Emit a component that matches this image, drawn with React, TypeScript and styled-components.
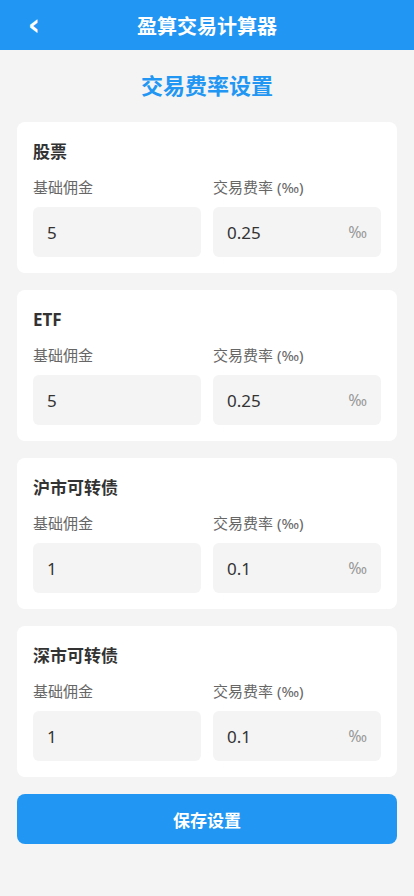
import styled, { createGlobalStyle } from "styled-components";

const GlobalStyle = createGlobalStyle`
  html, body {
    margin: 0;
    padding: 0;
    background: #f4f4f4;
    font-family: "Noto Sans", "Noto Sans CJK SC", sans-serif;
  }
  * {
    box-sizing: border-box;
  }
`;

const Page = styled.div`
  min-height: 896px;
  background: #f4f4f4;
`;

const Header = styled.header`
  position: relative;
  height: 50px;
  background: #2196f3;
  display: flex;
  align-items: center;
  justify-content: center;
`;

const BackButton = styled.button`
  position: absolute;
  left: 22px;
  top: 9px;
  width: 24px;
  height: 32px;
  border: none;
  background: none;
  padding: 0;
  color: #fff;
  font-family: "DejaVu Sans", sans-serif;
  font-size: 30px;
  font-weight: 700;
  line-height: 32px;
`;

const HeaderTitle = styled.h1`
  margin: 0;
  color: #fff;
  font-size: 20px;
  font-weight: 700;
`;

const Main = styled.main`
  padding: 0 17px 40px;
  display: flex;
  flex-direction: column;
  gap: 17px;
`;

const PageTitle = styled.h2`
  margin: 20px 0 5px;
  text-align: center;
  color: #2196f3;
  font-size: 22px;
  font-weight: 700;
  line-height: 30px;
`;

const Card = styled.section`
  background: #fff;
  border-radius: 8px;
  padding: 16px;
`;

const CardTitle = styled.h3`
  margin: 0 0 11px;
  color: #333;
  font-size: 17px;
  font-weight: 700;
  line-height: 28px;
`;

const FieldRow = styled.div`
  display: grid;
  grid-template-columns: minmax(0, 1fr) minmax(0, 1fr);
  gap: 12px;
`;

const Field = styled.div`
  display: flex;
  flex-direction: column;
  min-width: 0;
`;

const Label = styled.label`
  color: #666;
  font-size: 15px;
  line-height: 20px;
  margin-bottom: 10px;
`;

const InputBox = styled.div`
  height: 50px;
  border-radius: 6px;
  background: #f4f4f4;
  display: flex;
  align-items: center;
  padding: 0 14px;
`;

const Input = styled.input`
  flex: 1;
  width: 100%;
  min-width: 0;
  border: none;
  background: transparent;
  outline: none;
  padding: 0;
  color: #333;
  font-family: inherit;
  font-size: 17px;
`;

const Unit = styled.span`
  color: #999;
  font-size: 16px;
`;

const SaveButton = styled.button`
  height: 50px;
  border: none;
  border-radius: 8px;
  background: #2196f3;
  color: #fff;
  font-family: inherit;
  font-size: 17px;
  font-weight: 700;
`;

const rates = [
  { name: "股票", base: "5", rate: "0.25" },
  { name: "ETF", base: "5", rate: "0.25" },
  { name: "沪市可转债", base: "1", rate: "0.1" },
  { name: "深市可转债", base: "1", rate: "0.1" },
];

const App = () => {
  return (
    <Page>
      <GlobalStyle />
      <Header>
        <BackButton>‹</BackButton>
        <HeaderTitle>盈算交易计算器</HeaderTitle>
      </Header>
      <Main>
        <PageTitle>交易费率设置</PageTitle>
        {rates.map((item) => (
          <Card key={item.name}>
            <CardTitle>{item.name}</CardTitle>
            <FieldRow>
              <Field>
                <Label>基础佣金</Label>
                <InputBox>
                  <Input defaultValue={item.base} />
                </InputBox>
              </Field>
              <Field>
                <Label>交易费率 (‰)</Label>
                <InputBox>
                  <Input defaultValue={item.rate} />
                  <Unit>‰</Unit>
                </InputBox>
              </Field>
            </FieldRow>
          </Card>
        ))}
        <SaveButton>保存设置</SaveButton>
      </Main>
    </Page>
  );
};

export default App;
